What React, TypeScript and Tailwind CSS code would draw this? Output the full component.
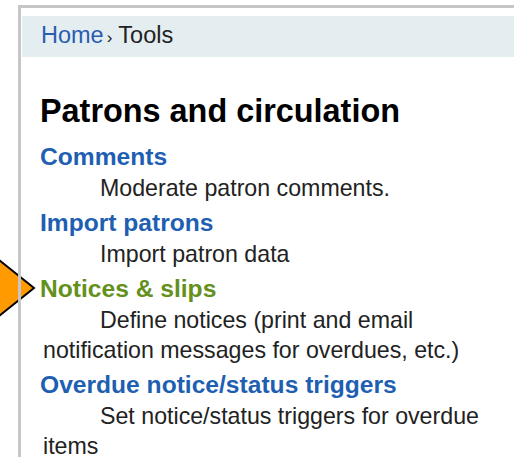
const TOOLS = [
  { name: "Comments", desc: "Moderate patron comments.", visited: false },
  { name: "Import patrons", desc: "Import patron data", visited: false },
  {
    name: "Notices & slips",
    desc: "Define notices (print and email notification messages for overdues, etc.)",
    visited: true,
  },
  {
    name: "Overdue notice/status triggers",
    desc: "Set notice/status triggers for overdue items",
    visited: false,
  },
];

// orange callout arrow pointing at the current entry
function Pointer() {
  return (
    <svg
      className="absolute left-0 top-[250px]"
      width="40"
      height="76"
      viewBox="0 0 40 76"
    >
      <polygon
        points="-6,6 34,38 -6,70"
        fill="#ff9a00"
        stroke="#000"
        strokeWidth="2"
        strokeLinejoin="miter"
      />
    </svg>
  );
}

export default function App() {
  return (
    <div
      className="relative h-[457px] w-[514px] overflow-hidden bg-white"
      style={{ fontFamily: '"Liberation Sans", Arial, sans-serif' }}
    >
      <Pointer />
      <div className="relative ml-[18px] mt-[5px] h-full border-l-[3px] border-t-[3px] border-[#c6c6c6] pl-[1px] pt-[8px]">
        <div className="h-[41px] bg-[#e4edf0] pl-[19px] text-[23.5px] leading-[38px] text-[#222]">
          <a className="text-[#2a5db0]">Home</a>
          <span className="ml-[3px] mr-[6px] text-[17px]">›</span>
          <span>Tools</span>
        </div>

        <div className="pl-[18px] pr-[8px] pt-[36px]">
          <h1 className="text-[32.4px] font-bold leading-[36px] text-black">
            Patrons and circulation
          </h1>
          <dl className="mt-[12px]">
            {TOOLS.map((t) => (
              <div key={t.name} className="mb-[4px]">
                <dt
                  className={
                    "text-[24.6px] font-bold leading-[32px] " +
                    (t.visited ? "text-[#64901c]" : "text-[#1f5fb2]")
                  }
                >
                  {t.name}
                </dt>
                <dd className="pl-[3px] indent-[57px] text-[23.2px] leading-[30px] text-[#222]">
                  {t.desc}
                </dd>
              </div>
            ))}
          </dl>
        </div>
      </div>
    </div>
  );
}
